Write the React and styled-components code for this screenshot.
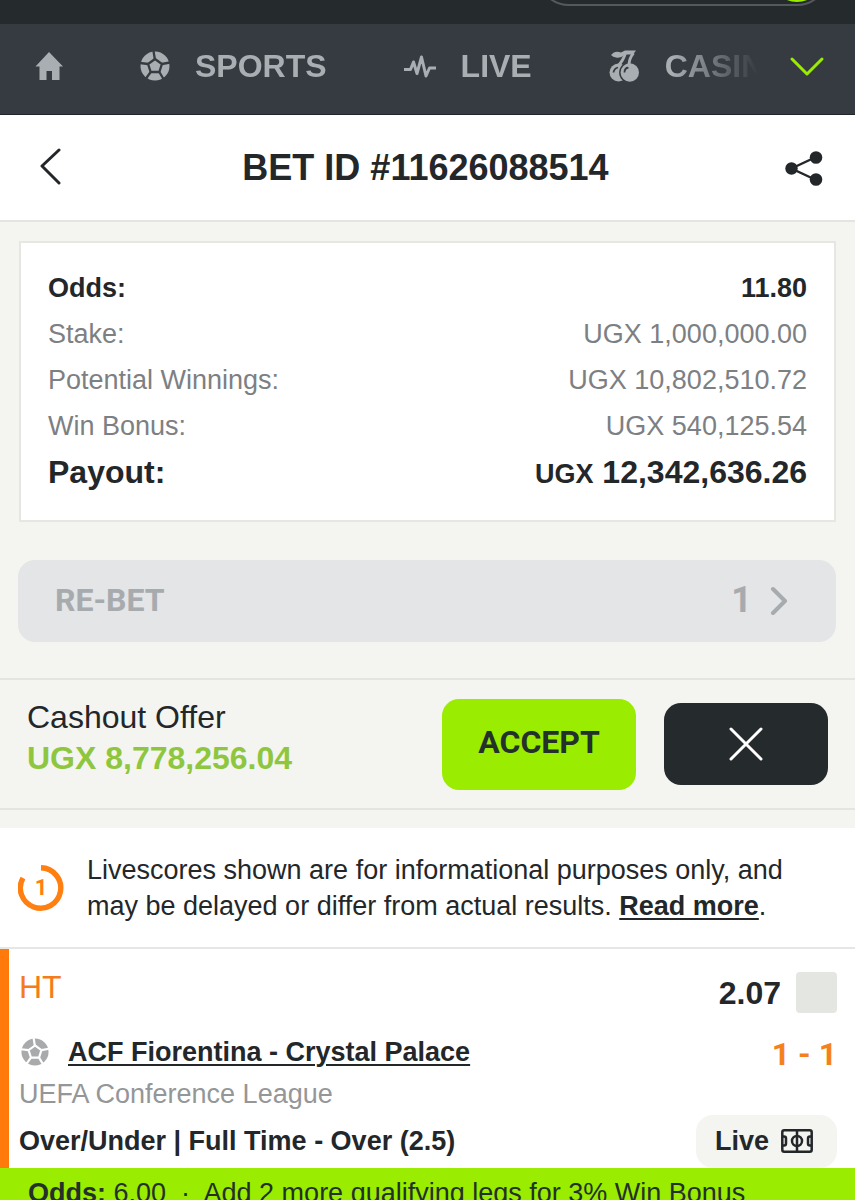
import React, { useState } from "react";
import styled, { createGlobalStyle } from "styled-components";

const GlobalStyle = createGlobalStyle`
  * {
    box-sizing: border-box;
  }
  body {
    margin: 0;
    background-color: #f4f5f0;
    color: #23272a;
    font-family: "Liberation Sans", Arial, Helvetica, sans-serif;
    font-size: 27px;
  }
  svg {
    display: block;
    flex-shrink: 0;
  }
`;

const Page = styled.div`
  height: 100vh;
  overflow: hidden;
`;

const TopBar = styled.div`
  height: 24px;
  display: flex;
  justify-content: flex-end;
  align-items: flex-end;
  overflow: hidden;
  padding: 0 26px 18px 0;
  background-color: #252a2c;
`;
const TopBarClip = styled.div`
  height: 6px;
  display: flex;
  align-items: flex-end;
`;
const Balance = styled.div`
  width: 292px;
  height: 64px;
  display: flex;
  justify-content: flex-end;
  align-items: flex-end;
  padding: 2px 3px;
  border: 2px solid #53595d;
  border-radius: 32px;
`;
const BalanceDot = styled.div`
  width: 54px;
  height: 54px;
  border-radius: 50%;
  background-color: #9aec00;
`;

const Nav = styled.nav`
  height: 91px;
  display: flex;
  align-items: center;
  padding: 0 30px 6px 35px;
  color: #a9aeb3;
  background-color: #363b42;
  border-bottom: 1px solid #222628;
`;
const NavItems = styled.div`
  flex: 1;
  display: flex;
  align-items: center;
  gap: 77px;
  margin-right: 31px;
  overflow: hidden;
  mask-image: linear-gradient(to right, #000 calc(100% - 86px), transparent);
`;
const NavLink = styled.a`
  display: flex;
  align-items: center;
  gap: 25px;
  color: inherit;
  font-size: 32px;
  line-height: 36px;
  font-weight: bold;
  text-decoration: none;
`;
const IconButton = styled.button`
  display: flex;
  padding: 0;
  border: none;
  background: none;
  color: ${props => (props.$lime ? "#9aec00" : "#23272a")};
`;

const Header = styled.header`
  display: flex;
  justify-content: space-between;
  align-items: center;
  height: 107px;
  padding: 0 32px 0 34px;
  background-color: #fff;
  border-bottom: 2px solid #e3e5e2;
`;
const Title = styled.h1`
  margin: 0;
  font-size: 36px;
  line-height: 40px;
`;

const Summary = styled.dl`
  margin: 19px 19px 38px;
  padding: 23px 27px 24px;
  background-color: #fff;
  border: 2px solid #e5e7e2;
`;
const SummaryRow = styled.div`
  display: flex;
  justify-content: space-between;
  height: 46px;
  line-height: 44px;
  color: ${props => (props.$strong ? "#23272a" : "#7d8083")};
  font-weight: ${props => (props.$strong ? "bold" : "normal")};
  font-size: ${props => (props.$large ? "32px" : "27px")};
`;
const Term = styled.dt`
  margin: 0;
`;
const Amount = styled.dd`
  margin: 0;
`;
const Currency = styled.span`
  font-size: 27px;
  line-height: 1;
`;

const Rebet = styled.button`
  display: flex;
  justify-content: space-between;
  align-items: center;
  width: calc(100% - 37px);
  height: 82px;
  margin: 0 19px 36px 18px;
  padding: 0 48px 2px 37px;
  border: none;
  border-radius: 17px;
  background-color: #e3e5e7;
  color: #a7abae;
  font-family: Roboto, sans-serif;
  font-size: 32px;
  font-weight: bold;
`;
const RebetCount = styled.span`
  display: flex;
  align-items: center;
  gap: 18px;
  font-size: 36px;
`;

const Cashout = styled.section`
  display: flex;
  align-items: center;
  height: 132px;
  margin-bottom: 18px;
  padding: 0 27px;
  border-top: 2px solid #e3e5e0;
  border-bottom: 2px solid #e3e5e0;
`;
const Offer = styled.div`
  flex: 1;
  padding-bottom: 12px;
  font-size: 32px;
  line-height: 41px;
`;
const OfferAmount = styled.div`
  color: #8fc63f;
  font-weight: bold;
`;
const AcceptButton = styled.button`
  width: 194px;
  height: 91px;
  margin-right: 28px;
  padding: 0 0 4px;
  border: none;
  border-radius: 17px;
  background-color: #9aec00;
  color: #23312a;
  font-family: Roboto, sans-serif;
  font-size: 32px;
  font-weight: bold;
`;
const DeclineButton = styled.button`
  display: flex;
  justify-content: center;
  align-items: center;
  width: 164px;
  height: 82px;
  padding: 0;
  border: none;
  border-radius: 17px;
  background-color: #252a2d;
  color: #fff;
`;

const Notice = styled.section`
  display: flex;
  align-items: center;
  gap: 23px;
  height: 121px;
  padding: 0 18px;
  background-color: #fff;
  border-bottom: 2px solid #e5e7e5;
`;
const NoticeText = styled.p`
  margin: 0;
  line-height: 36px;
`;
const TextLink = styled.a`
  color: inherit;
  font-weight: bold;
  text-decoration: underline;
  text-decoration-thickness: 2px;
  text-underline-offset: 3px;
`;

const Event = styled.article`
  padding: 23px 18px 0 10px;
  background-color: #fff;
  border-left: 9px solid #ff7a0a;
`;
const EventRow = styled.div`
  display: flex;
  justify-content: space-between;
  align-items: center;
  height: ${props => props.$height}px;
`;
const EventTop = styled(EventRow)`
  margin-bottom: 17px;
`;
const Period = styled.span`
  align-self: flex-start;
  color: #f57c1a;
  font-size: 32px;
  line-height: 30px;
`;
const Odds = styled.label`
  display: flex;
  align-items: center;
  gap: 15px;
  font-size: 32px;
  line-height: 36px;
  font-weight: bold;
`;
const Check = styled.input`
  appearance: none;
  width: 41px;
  height: 41px;
  margin: 0;
  border-radius: 4px;
  background-color: #e4e6e1;
  &:checked {
    background-color: #9aec00;
  }
`;
const Teams = styled.div`
  display: flex;
  align-items: center;
  gap: 19px;
  padding-left: 2px;
  color: #a9aaac;
`;
const TeamLink = styled(TextLink)`
  color: #23272a;
`;
const Score = styled.span`
  padding-top: 4px;
  color: #f5811e;
  font-family: Roboto, sans-serif;
  font-size: 32px;
  font-weight: bold;
`;
const League = styled.span`
  color: #949698;
`;
const Market = styled.strong`
  font-weight: bold;
`;
const LiveButton = styled.button`
  display: flex;
  align-items: center;
  justify-content: center;
  gap: 12px;
  width: 141px;
  height: 53px;
  padding: 0 5px 0 0;
  border: none;
  border-radius: 17px;
  background-color: #f4f4f1;
  color: #23272a;
  font-family: inherit;
  font-size: 27px;
  font-weight: bold;
`;

const BonusBar = styled.footer`
  display: flex;
  padding: 7px 28px;
  line-height: 36px;
  background-color: #9aec00;
  color: #23312a;
  white-space: pre;
`;

const Home = () => (
  <svg width="28" height="28" viewBox="0 0 28 28" fill="currentColor">
    <path d="M14 0 28 14.5H24.5V28H17V19H11.5V28H4.500V14.5H.500Z" />
  </svg>
);

const Ball = ({ size, id }) => (
  <svg width={size} height={size} viewBox="0 0 30 30">
    <mask id={id}>
      <circle cx="15" cy="15" r="14.500" fill="#fff" />
      <g fill="none" stroke="#000" strokeWidth="2.300">
        <path d="M15 8 21.900 13 19.300 21H10.700L8.100 13Z" />
        <path d="M14.800 8 13.500 0M21.900 13 30 11.500M19.300 21 23.500 28M10.700 21 6 27.500M8.100 13 0 12" />
      </g>
    </mask>
    <rect width="30" height="30" fill="currentColor" mask={`url(#${id})`} />
  </svg>
);

const Pulse = () => (
  <svg width="32" height="26" viewBox="0 0 32 26" fill="none" stroke="currentColor" strokeWidth="3" strokeLinejoin="round">
    <path d="M0 16.500H6.500L9.500 9 13 20.500 17.500 4 22 23 25.500 15H32" />
  </svg>
);

const Cherries = () => (
  <svg width="31" height="32" viewBox="0 0 31 32">
    <mask id="cherries">
      <rect width="31" height="32" fill="#fff" />
      <circle cx="20.800" cy="22.500" r="10.700" fill="#000" />
    </mask>
    <circle cx="9.500" cy="22.500" r="9" fill="currentColor" mask="url(#cherries)" />
    <circle cx="20.800" cy="22.500" r="9.200" fill="currentColor" />
    <path d="M4.500 22.500Q5 18.500 9 17.500M15.500 22.500Q15.500 18 19.500 17.500" fill="none" stroke="#363b42" strokeWidth="1.800" />
    <path d="M16.500 3Q14.500 10 9 16M24.500 3Q19.500 9 20 17" fill="none" stroke="currentColor" strokeWidth="2.800" />
    <path d="M2 5Q6 0 12 2.500L16 .500H27L24 4.500H16Q12 8.500 7 7.500 4 7 2 5Z" fill="currentColor" />
  </svg>
);

const Share = () => (
  <svg width="38" height="36" viewBox="0 0 38 36" fill="currentColor">
    <path d="M31 7 6.500 18.500 31 30" fill="none" stroke="currentColor" strokeWidth="2.400" />
    <circle cx="6.500" cy="18.500" r="6.200" />
    <circle cx="31" cy="7.500" r="6.300" />
    <circle cx="31" cy="29.500" r="6.300" />
  </svg>
);

const Stroke = ({ w, h, d, width = 3 }) => (
  <svg width={w} height={h} viewBox={`0 0 ${w} ${h}`} fill="none" stroke="currentColor" strokeWidth={width} strokeLinecap="round" strokeLinejoin="round">
    <path d={d} />
  </svg>
);

const Countdown = () => (
  <svg width="46" height="46" viewBox="0 0 46 46">
    <path d="M23 2.800A20.200 20.200 0 1 1 5 13" fill="none" stroke="#ff7f11" strokeWidth="5.400" />
    <text x="23" y="30" textAnchor="middle" fill="#ff7f11" fontFamily="Roboto, sans-serif" fontSize="22" fontWeight="bold">1</text>
  </svg>
);

const Pitch = () => (
  <svg width="32" height="24" viewBox="0 0 32 24" fill="none" stroke="currentColor" strokeWidth="2.500">
    <rect x="1.300" y="1.300" width="29.400" height="21.400" rx="2" />
    <path d="M16 1V23M1 7.500H3Q5 7.500 5 9.500V14.500Q5 16.500 3 16.500H1M31 7.500H29Q27 7.500 27 9.500V14.500Q27 16.500 29 16.500H31" />
    <circle cx="16" cy="12" r="5" />
  </svg>
);

const ROWS = [
  { label: "Odds:", value: "11.80", strong: true },
  { label: "Stake:", value: "UGX 1,000,000.00" },
  { label: "Potential Winnings:", value: "UGX 10,802,510.72" },
  { label: "Win Bonus:", value: "UGX 540,125.54" }
];

export default () => {
  const [picked, setPicked] = useState(false);
  return (
    <Page>
      <GlobalStyle />
      <TopBar>
        <TopBarClip>
          <Balance>
            <BalanceDot />
          </Balance>
        </TopBarClip>
      </TopBar>
      <Nav>
        <NavItems>
          <NavLink href="#home" aria-label="Home"><Home /></NavLink>
          <NavLink href="#sports"><Ball size={30} id="ball-nav" />SPORTS</NavLink>
          <NavLink href="#live"><Pulse />LIVE</NavLink>
          <NavLink href="#casino"><Cherries />CASINO</NavLink>
        </NavItems>
        <IconButton $lime aria-label="More">
          <Stroke w={36} h={22} d="M3 4 18 19 33 4" />
        </IconButton>
      </Nav>
      <Header>
        <IconButton aria-label="Back">
          <Stroke w={32} h={40} d="M25 2 8 18 25 35" />
        </IconButton>
        <Title>BET ID #11626088514</Title>
        <IconButton aria-label="Share"><Share /></IconButton>
      </Header>
      <Summary>
        {ROWS.map(r => (
          <SummaryRow key={r.label} $strong={r.strong}>
            <Term>{r.label}</Term>
            <Amount>{r.value}</Amount>
          </SummaryRow>
        ))}
        <SummaryRow $strong $large>
          <Term>Payout:</Term>
          <Amount><Currency>UGX</Currency> 12,342,636.26</Amount>
        </SummaryRow>
      </Summary>
      <Rebet disabled>
        RE-BET
        <RebetCount>
          1
          <Stroke w={18} h={30} d="M3 4 15 16 3 28" width={4} />
        </RebetCount>
      </Rebet>
      <Cashout>
        <Offer>
          Cashout Offer
          <OfferAmount>UGX 8,778,256.04</OfferAmount>
        </Offer>
        <AcceptButton>ACCEPT</AcceptButton>
        <DeclineButton aria-label="Decline">
          <Stroke w={34} h={34} d="M2 2 32 32M32 2 2 32" />
        </DeclineButton>
      </Cashout>
      <Notice>
        <Countdown />
        <NoticeText>
          Livescores shown are for informational purposes only, and may be
          delayed or differ from actual results. <TextLink href="#more">Read more</TextLink>.
        </NoticeText>
      </Notice>
      <Event>
        <EventTop $height={41}>
          <Period>HT</Period>
          <Odds>
            2.07
            <Check type="checkbox" checked={picked} onChange={() => setPicked(!picked)} />
          </Odds>
        </EventTop>
        <EventRow $height={44}>
          <Teams>
            <Ball size={28} id="ball-event" />
            <TeamLink href="#match">ACF Fiorentina - Crystal Palace</TeamLink>
          </Teams>
          <Score>1 - 1</Score>
        </EventRow>
        <EventRow $height={40}>
          <League>UEFA Conference League</League>
        </EventRow>
        <EventRow $height={54}>
          <Market>Over/Under | Full Time - Over (2.5)</Market>
          <LiveButton>Live <Pitch /></LiveButton>
        </EventRow>
      </Event>
      <BonusBar>
        <strong>Odds:</strong> 6.00  ·  Add 2 more qualifying legs for 3% Win Bonus
      </BonusBar>
    </Page>
  );
};
